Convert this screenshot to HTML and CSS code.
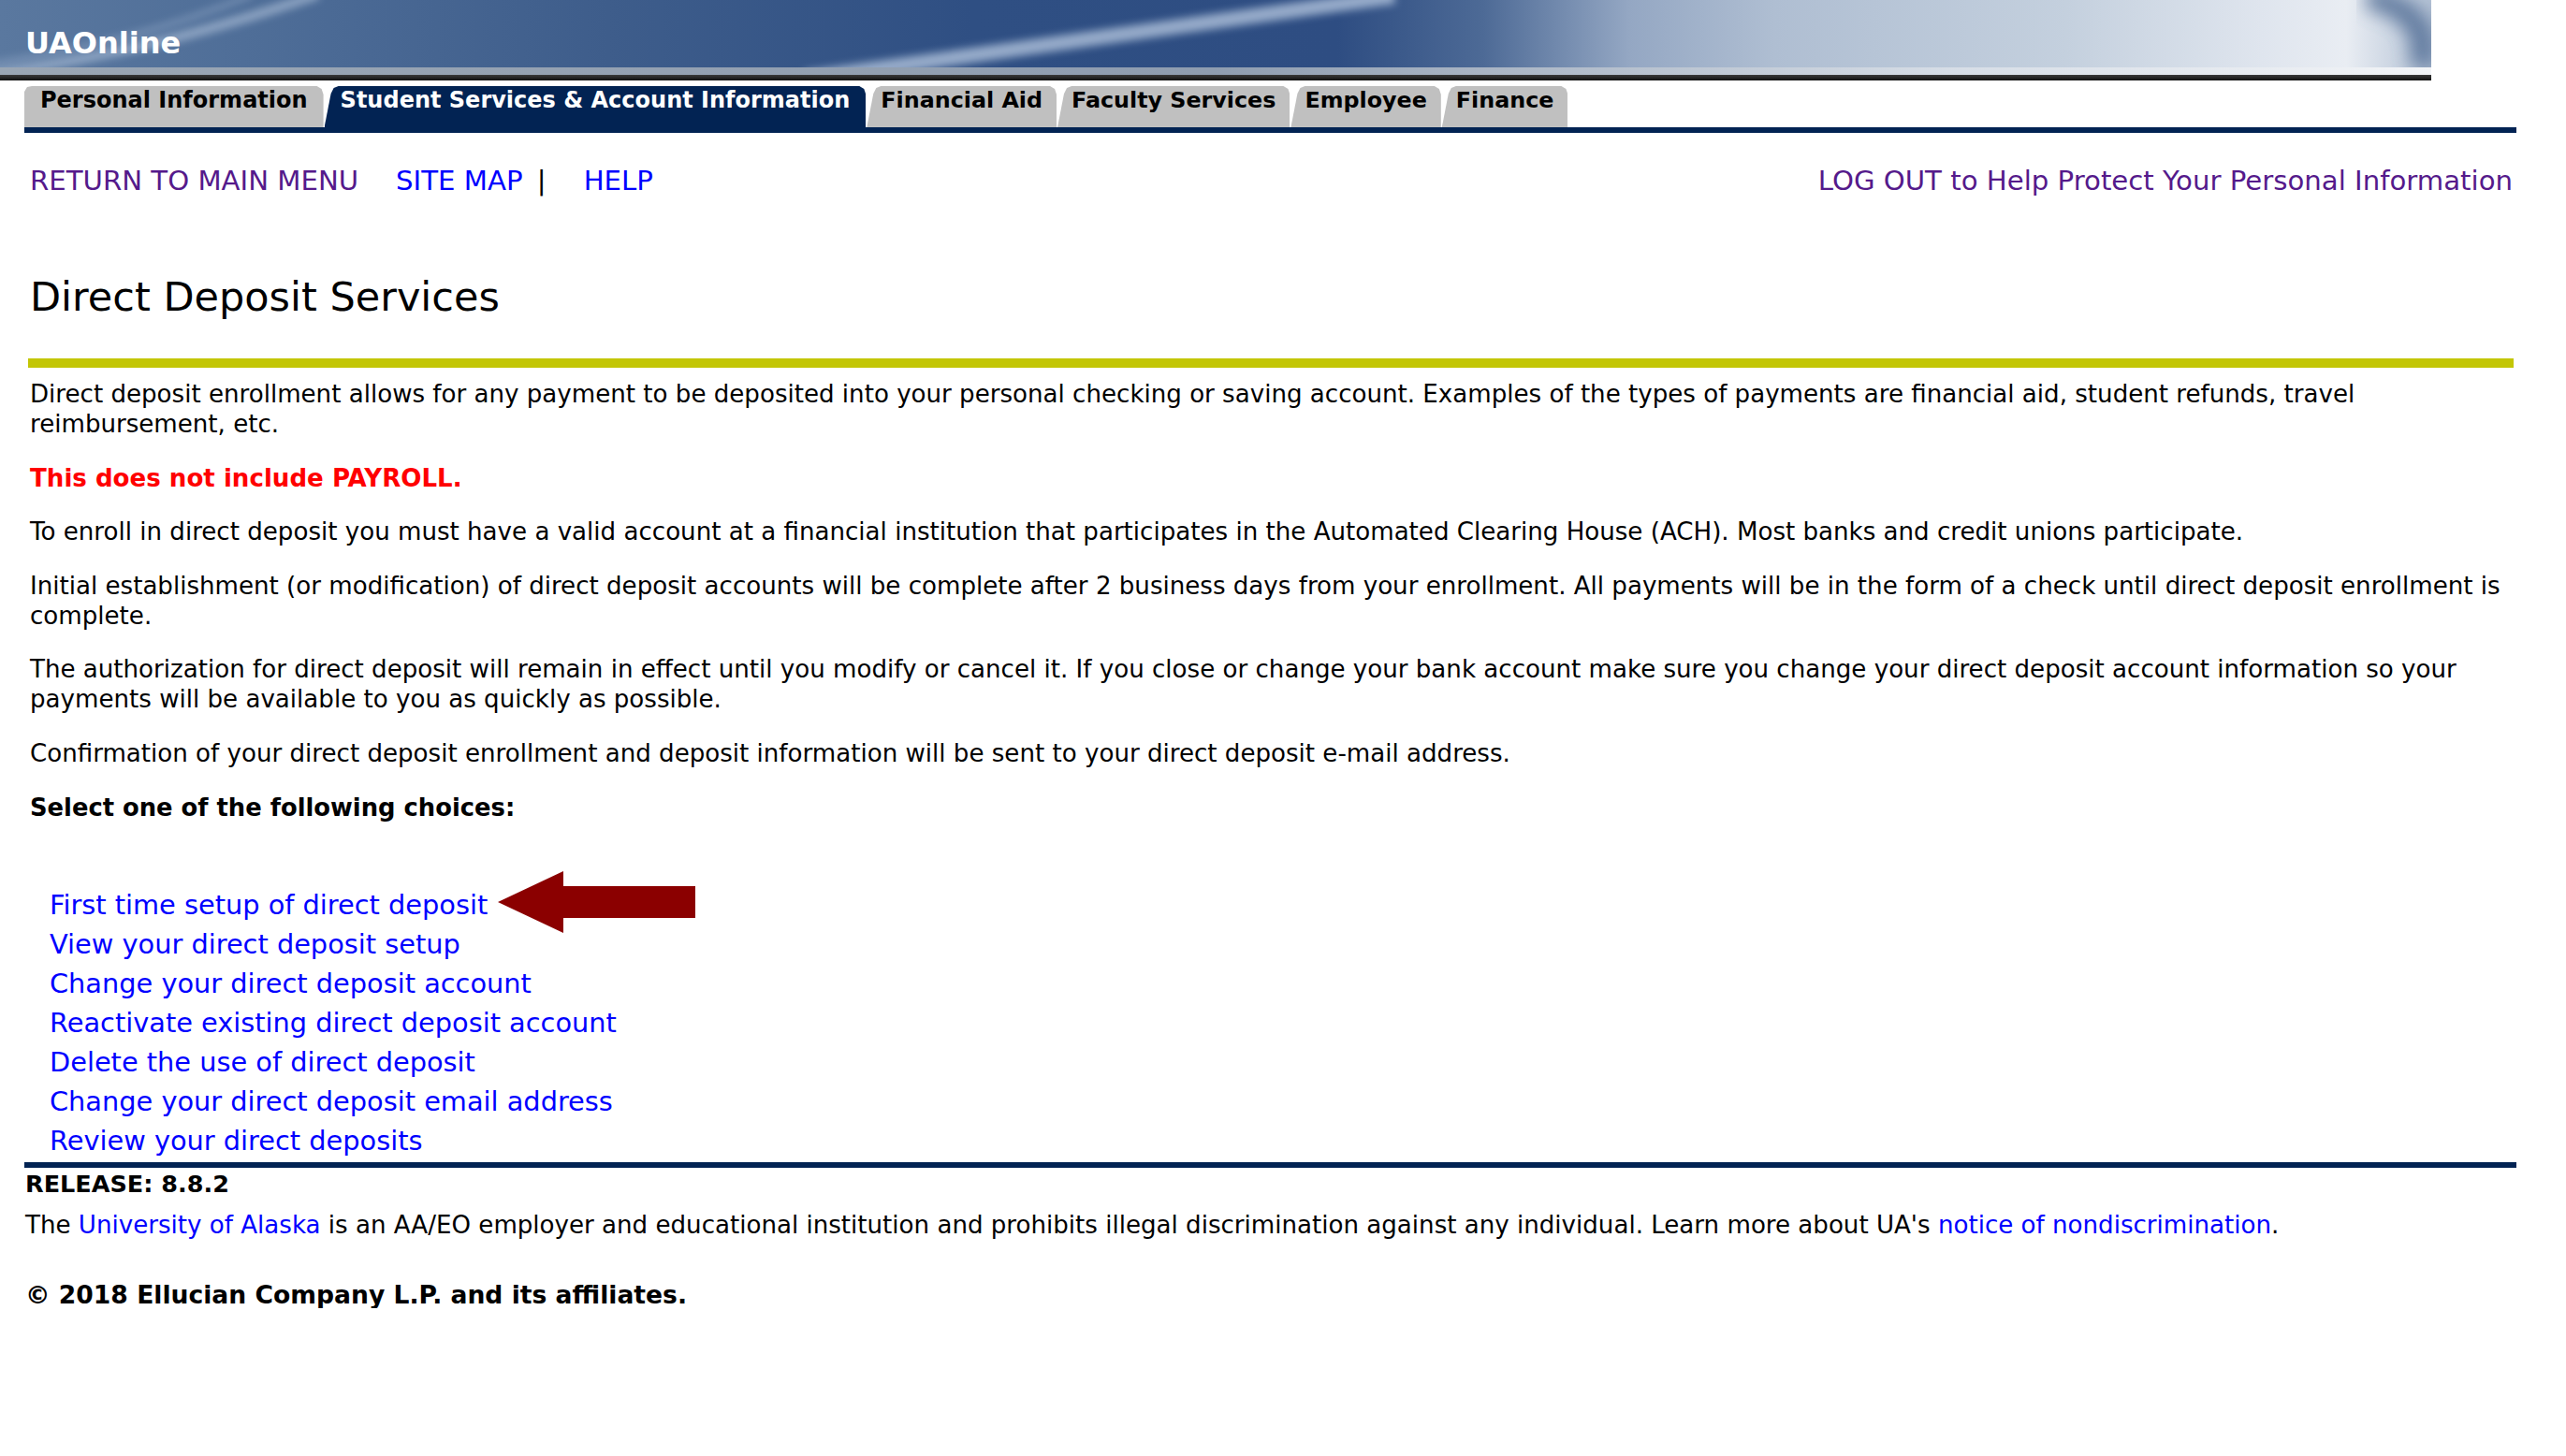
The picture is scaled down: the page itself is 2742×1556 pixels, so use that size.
FILE: index.html
```html
<!DOCTYPE html>
<html lang="en">
<head>
<meta charset="utf-8">
<title>Direct Deposit Services</title>
<link rel="stylesheet" href="styles.css">
</head>
<body>
<header class="banner">
  <svg class="banner-art" viewBox="0 0 2598 86" preserveAspectRatio="none" aria-hidden="true">
    <defs>
      <linearGradient id="bg" x1="0" y1="0" x2="1" y2="0">
        <stop offset="0" stop-color="#5a789f"/>
        <stop offset="0.1" stop-color="#4f6e98"/>
        <stop offset="0.25" stop-color="#3e5d8b"/>
        <stop offset="0.4" stop-color="#2f4f83"/>
        <stop offset="0.55" stop-color="#2e4d82"/>
        <stop offset="0.61" stop-color="#4d6a96"/>
        <stop offset="0.67" stop-color="#94a7c3"/>
        <stop offset="0.73" stop-color="#afbed2"/>
        <stop offset="0.85" stop-color="#c4d0de"/>
        <stop offset="0.93" stop-color="#dfe5ee"/>
        <stop offset="0.965" stop-color="#e9edf3"/>
        <stop offset="1" stop-color="#b4c2d5"/>
      </linearGradient>
      <radialGradient id="topshade" cx="0.5" cy="0" r="0.5">
        <stop offset="0" stop-color="#3d5c8a" stop-opacity="0.85"/>
        <stop offset="1" stop-color="#3d5c8a" stop-opacity="0"/>
      </radialGradient>
      <linearGradient id="dark" x1="0" y1="0" x2="0" y2="1">
        <stop offset="0" stop-color="#3a3a3a"/>
        <stop offset="1" stop-color="#111"/>
      </linearGradient>
      <linearGradient id="strip" x1="0" y1="0" x2="1" y2="0">
        <stop offset="0" stop-color="#9aa6b4"/>
        <stop offset="0.5" stop-color="#8f9db0"/>
        <stop offset="0.8" stop-color="#d6dde6"/>
        <stop offset="1" stop-color="#f2f4f7"/>
      </linearGradient>
      <filter id="blur" x="-0.1" y="-1" width="1.2" height="3">
        <feGaussianBlur stdDeviation="4"/>
      </filter>
      <filter id="blur2" x="-0.2" y="-1" width="1.4" height="3">
        <feGaussianBlur stdDeviation="10"/>
      </filter>
    </defs>
    <rect x="0" y="0" width="2598" height="86" fill="url(#bg)"/>
    <ellipse cx="2100" cy="-10" rx="420" ry="60" fill="url(#topshade)"/>
    <path d="M-20,80 C120,62 230,32 340,-6" stroke="#a9bcd5" stroke-width="10" fill="none" opacity="0.7" filter="url(#blur)"/>
    <path d="M-20,70 C100,52 190,28 270,-6" stroke="#8ea5c4" stroke-width="6" fill="none" opacity="0.6" filter="url(#blur)"/>
    <path d="M860,84 L1490,-4" stroke="#a8bbd6" stroke-width="16" fill="none" opacity="0.85" filter="url(#blur)"/>
    <path d="M2530,-4 C2585,10 2597,40 2586,72" stroke="#4a6690" stroke-width="26" fill="none" opacity="0.8" filter="url(#blur2)"/>
    <rect x="0" y="72" width="2598" height="8" fill="url(#strip)"/>
    <rect x="0" y="80" width="2598" height="6" fill="url(#dark)"/>
  </svg>
  <span class="brand">UAOnline</span>
</header>

<nav class="tabs">
  <a class="tab first" href="#">Personal Information</a>
  <a class="tab active" href="#">Student Services &amp; Account Information</a>
  <a class="tab" href="#">Financial Aid</a>
  <a class="tab" href="#">Faculty Services</a>
  <a class="tab" href="#">Employee</a>
  <a class="tab" href="#">Finance</a>
</nav>

<main class="page">
  <div class="toplinks">
    <div class="toplinks-left">
      <a class="visited" href="#">RETURN TO MAIN MENU</a>
      <span class="pair"><a href="#">SITE MAP</a> <span class="sep">|</span></span>
      <a href="#">HELP</a>
    </div>
    <a class="visited" href="#">LOG OUT to Help Protect Your Personal Information</a>
  </div>

  <h1 class="title">Direct Deposit Services</h1>
  <div class="rule"></div>

  <div class="content">
    <p>Direct deposit enrollment allows for any payment to be deposited into your personal checking or saving account. Examples of the types of payments are financial aid, student refunds, travel reimbursement, etc.</p>
    <p class="warn">This does not include PAYROLL.</p>
    <p>To enroll in direct deposit you must have a valid account at a financial institution that participates in the Automated Clearing House (ACH). Most banks and credit unions participate.</p>
    <p>Initial establishment (or modification) of direct deposit accounts will be complete after 2 business days from your enrollment. All payments will be in the form of a check until direct deposit enrollment is complete.</p>
    <p>The authorization for direct deposit will remain in effect until you modify or cancel it. If you close or change your bank account make sure you change your direct deposit account information so your payments will be available to you as quickly as possible.</p>
    <p>Confirmation of your direct deposit enrollment and deposit information will be sent to your direct deposit e-mail address.</p>
    <p class="lead">Select one of the following choices:</p>

    <ul class="choices">
      <li><a href="#">First time setup of direct deposit</a><svg class="arrow" viewBox="0 0 211 66" aria-hidden="true"><polygon points="0,33 70,0 70,16 211,16 211,50 70,50 70,66" fill="#8b0000"/></svg></li>
      <li><a href="#">View your direct deposit setup</a></li>
      <li><a href="#">Change your direct deposit account</a></li>
      <li><a href="#">Reactivate existing direct deposit account</a></li>
      <li><a href="#">Delete the use of direct deposit</a></li>
      <li><a href="#">Change your direct deposit email address</a></li>
      <li><a href="#">Review your direct deposits</a></li>
    </ul>
  </div>
</main>

<footer class="footer">
  <div class="release">RELEASE: 8.8.2</div>
  <p class="notice">The <a href="#">University of Alaska</a> is an AA/EO employer and educational institution and prohibits illegal discrimination against any individual. Learn more about UA's <a href="#">notice of nondiscrimination</a>.</p>
  <p class="copy">© 2018 Ellucian Company L.P. and its affiliates.</p>
</footer>
</body>
</html>
```

FILE: styles.css
```css
* { box-sizing: border-box; }

html, body {
  margin: 0;
  padding: 0;
  background: #ffffff;
}

body {
  font-family: "DejaVu Sans", Verdana, sans-serif;
  color: #000000;
  width: 2742px;
}

a { text-decoration: none; color: #0000ff; }
a.visited { color: #551a8b; }

/* ---------- banner ---------- */
.banner {
  position: relative;
  width: 2598px;
  height: 86px;
  overflow: hidden;
}

.banner-art {
  position: absolute;
  left: 0;
  top: 0;
  width: 100%;
  height: 100%;
  display: block;
}

.brand {
  position: relative;
  display: block;
  padding: 26px 0 0 27px;
  font-size: 32px;
  line-height: 40px;
  font-weight: bold;
  color: #ffffff;
}

/* ---------- tabs ---------- */
.tabs {
  display: flex;
  gap: 1px;
  margin: 6px 0 0 26px;
  width: 2663px;
  border-bottom: 6px solid #022353;
}

.tab {
  display: block;
  height: 44px;
  padding: 1px 15px 0 15px;
  font-size: 23.8px;
  line-height: 28px;
  font-weight: bold;
  color: #000000;
  background: #c0c0c0;
  clip-path: polygon(0 100%, 7px 8px, 10px 2px, 15px 0, calc(100% - 7px) 0, calc(100% - 2px) 3px, 100% 9px, 100% 100%);
}

.tab.first {
  padding-left: 17px;
  padding-right: 17px;
  font-size: 24px;
  clip-path: polygon(0 100%, 0 6px, 3px 1px, 8px 0, calc(100% - 7px) 0, calc(100% - 2px) 3px, 100% 9px, 100% 100%);
}

.tab.active {
  padding-left: 17px;
  padding-right: 17px;
  font-size: 24px;
  background: #022353;
  color: #ffffff;
}

/* ---------- page ---------- */
.page {
  padding: 0 0 0 32px;
  width: 2742px;
}

.toplinks {
  display: flex;
  justify-content: space-between;
  align-items: baseline;
  margin-top: 33px;
  width: 2653px;
  font-size: 29.2px;
  line-height: 36px;
}

.toplinks-left {
  display: flex;
  gap: 40px;
}

.sep {
  color: #000000;
  margin-left: 6px;
}

.title {
  margin: 80px 0 0 0;
  font-size: 43px;
  line-height: 52px;
  font-weight: normal;
}

.rule {
  margin: 40px 0 0 -2px;
  width: 2656px;
  height: 10px;
  background: #c3c605;
}

.content {
  margin-top: 12px;
  width: 2654px;
  font-size: 26.1px;
  line-height: 32px;
}

.content p {
  margin: 0 0 25.6px 0;
}

.content p.warn {
  color: #ff0000;
  font-weight: bold;
}

.content p.lead {
  font-weight: bold;
  font-size: 25.8px;
  margin-bottom: 0;
}

.choices {
  list-style: none;
  margin: 67px 0 0 0;
  padding: 0 0 0 21px;
  font-size: 28.8px;
  line-height: 42px;
}

.choices li {
  display: flex;
  align-items: center;
  height: 42px;
}

.arrow {
  width: 211px;
  height: 66px;
  margin: 0 0 0 11px;
  flex: none;
  position: relative;
  top: -3px;
}

/* ---------- footer ---------- */
.footer {
  margin: 2px 0 0 26px;
  width: 2663px;
  border-top: 6px solid #022353;
  padding: 3px 0 0 1px;
  font-size: 26.1px;
  line-height: 28px;
}

.release {
  font-weight: bold;
  font-size: 25.5px;
}

.notice {
  margin: 16px 0 0 0;
}

.copy {
  margin: 47px 0 0 0;
  font-weight: bold;
  font-size: 26.6px;
}
```
